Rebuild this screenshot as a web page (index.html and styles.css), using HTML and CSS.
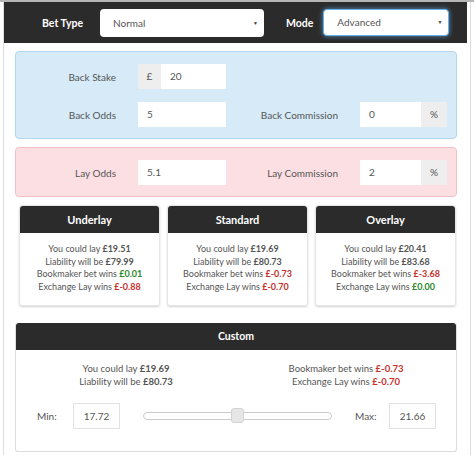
FILE: index.html
```html
<!DOCTYPE html>
<html lang="en">
<head>
    <meta charset="UTF-8">
    <meta name="viewport" content="width=device-width, initial-scale=1.0">
    <title>Matched Betting Calculator</title>
    <link rel="stylesheet" href="styles.css">
</head>
<body>
    <div class="calc">
        <div class="toolbar">
            <label class="bar-label bar-label-first" for="bet-type">Bet Type</label>
            <div class="select select-type" id="bet-type">Normal<span class="caret">&#9660;</span></div>
            <label class="bar-label" for="mode">Mode</label>
            <div class="select select-mode" id="mode">Advanced<span class="caret">&#9660;</span></div>
        </div>

        <div class="panel panel-back">
            <div class="field-label">Back Stake</div>
            <div class="input-group">
                <span class="addon addon-pound">&pound;</span>
                <div class="input">20</div>
            </div>
            <div></div>
            <div></div>

            <div class="field-label">Back Odds</div>
            <div class="input-group"><div class="input">5</div></div>
            <div class="field-label">Back Commission</div>
            <div class="input-group">
                <div class="input">0</div>
                <span class="addon addon-pct">%</span>
            </div>
        </div>

        <div class="panel panel-lay">
            <div class="field-label">Lay Odds</div>
            <div class="input-group"><div class="input">5.1</div></div>
            <div class="field-label">Lay Commission</div>
            <div class="input-group">
                <div class="input">2</div>
                <span class="addon addon-pct">%</span>
            </div>
        </div>

        <div class="cards">
            <div class="card">
                <div class="card-head">Underlay</div>
                <div class="card-body">
                    <div>You could lay <b>&pound;19.51</b></div>
                    <div>Liability will be <b>&pound;79.99</b></div>
                    <div>Bookmaker bet wins <b class="win">&pound;0.01</b></div>
                    <div>Exchange Lay wins <b class="loss">&pound;-0.88</b></div>
                </div>
            </div>
            <div class="card">
                <div class="card-head">Standard</div>
                <div class="card-body">
                    <div>You could lay <b>&pound;19.69</b></div>
                    <div>Liability will be <b>&pound;80.73</b></div>
                    <div>Bookmaker bet wins <b class="loss">&pound;-0.73</b></div>
                    <div>Exchange Lay wins <b class="loss">&pound;-0.70</b></div>
                </div>
            </div>
            <div class="card">
                <div class="card-head">Overlay</div>
                <div class="card-body">
                    <div>You could lay <b>&pound;20.41</b></div>
                    <div>Liability will be <b>&pound;83.68</b></div>
                    <div>Bookmaker bet wins <b class="loss">&pound;-3.68</b></div>
                    <div>Exchange Lay wins <b class="win">&pound;0.00</b></div>
                </div>
            </div>
        </div>

        <div class="custom">
            <div class="custom-head">Custom</div>
            <div class="custom-body">
                <div class="custom-results">
                    <div>
                        <div>You could lay <b>&pound;19.69</b></div>
                        <div>Liability will be <b>&pound;80.73</b></div>
                    </div>
                    <div>
                        <div>Bookmaker bet wins <b class="loss">&pound;-0.73</b></div>
                        <div>Exchange Lay wins <b class="loss">&pound;-0.70</b></div>
                    </div>
                </div>
                <div class="range-row">
                    <span class="range-label">Min:</span>
                    <div class="range-input">17.72</div>
                    <div class="slider">
                        <div class="slider-thumb"></div>
                    </div>
                    <span class="range-label range-label-max">Max:</span>
                    <div class="range-input">21.66</div>
                </div>
            </div>
        </div>
    </div>
</body>
</html>
```

FILE: styles.css
```css
body {
    margin: 0;
    font-family: 'Lato', 'Liberation Sans', sans-serif;
    font-size: 9px;
    color: #555;
    background: #fff;
    border-top: 2px solid #b5b5b5;
}
.calc {
    margin: 0 3px;
    padding: 0 3px 0 0;
    height: 453px;
    border-left: 1px solid #ddd;
    border-right: 1px solid #ddd;
    box-sizing: border-box;
}
.toolbar {
    display: flex;
    align-items: center;
    height: 41px;
    background: #2b2b2b;
}
.bar-label {
    flex-shrink: 0;
    white-space: nowrap;
    color: #fff;
    font-weight: bold;
    font-size: 10.5px;
    margin: 0 10px 0 22px;
}
.bar-label-first {
    margin-left: 38px;
    margin-right: 0;
    width: 58px;
}
.select {
    flex-shrink: 0;
    position: relative;
    box-sizing: border-box;
    height: 28px;
    line-height: 28px;
    padding-left: 13px;
    background: #fff;
    border-radius: 4px;
    font-size: 10px;
    color: #555;
}
.select-type {
    width: 164px;
}
.select-mode {
    width: 126px;
    height: 27px;
    line-height: 25px;
    border: 1px solid #66afe9;
    box-shadow: 0 0 5px rgba(102, 175, 233, 0.8);
}
.caret {
    position: absolute;
    right: 6px;
    top: 0;
    font-size: 5px;
    color: #333;
}
.panel {
    display: grid;
    grid-template-columns: 122px 88px 134px 87px;
    row-gap: 13px;
    align-items: center;
    margin: 8px 10px 0 11px;
    padding: 12px 0 11px;
    border: 1px solid;
    border-radius: 4px;
}
.panel-back {
    background: #d6eaf8;
    border-color: #b3d7ee;
}
.panel-lay {
    background: #fcdfe3;
    border-color: #f3c0c8;
}
.field-label {
    text-align: right;
    padding-right: 22px;
    font-size: 10px;
}
.input-group {
    display: flex;
    height: 25px;
}
.input {
    flex: 1;
    background: #fff;
    line-height: 25px;
    padding-left: 9px;
    font-size: 10px;
}
.addon {
    background: #eee;
    line-height: 25px;
    text-align: center;
    font-size: 10px;
}
.addon-pound {
    width: 23px;
}
.addon-pct {
    width: 26px;
}
.cards {
    display: grid;
    grid-template-columns: repeat(3, 141px);
    column-gap: 7px;
    margin: 8px 14px 0 15px;
}
.card {
    border: 1px solid #e6e6e6;
    border-radius: 3px;
    box-shadow: 0 1px 2px rgba(0, 0, 0, 0.18);
    height: 101px;
    box-sizing: border-box;
}
.card-head {
    background: #2b2b2b;
    color: #fff;
    font-weight: bold;
    font-size: 11px;
    text-align: center;
    height: 27px;
    line-height: 27px;
    border-radius: 3px 3px 0 0;
}
.card-body {
    padding-top: 10px;
    text-align: center;
    line-height: 12.7px;
}
.win {
    color: #2c8a2c;
}
.loss {
    color: #c9302c;
}
.custom {
    margin: 17px 10px 0 11px;
    border: 1px solid #ddd;
    border-top: none;
    border-radius: 3px;
}
.custom-head {
    background: #2b2b2b;
    color: #fff;
    font-weight: bold;
    font-size: 10.5px;
    text-align: center;
    height: 27px;
    line-height: 27px;
    border-radius: 3px 3px 0 0;
}
.custom-body {
    padding: 12px 0 22px;
    font-size: 9.5px;
}
.custom-results {
    display: grid;
    grid-template-columns: 1fr 1fr;
    text-align: center;
    line-height: 13px;
}
.range-row {
    display: flex;
    align-items: center;
    margin-top: 15px;
    padding-left: 21px;
}
.range-label {
    width: 36px;
    font-size: 10px;
}
.range-label-max {
    width: 34px;
}
.range-input {
    box-sizing: border-box;
    width: 47px;
    height: 26px;
    line-height: 24px;
    border: 1px solid #e2e2e2;
    text-align: center;
    font-size: 10px;
}
.slider {
    position: relative;
    box-sizing: border-box;
    width: 189px;
    height: 8px;
    margin: 0 23px;
    border: 1px solid #ccc;
    border-radius: 4px;
    background: #fff;
}
.slider-thumb {
    position: absolute;
    left: 87px;
    top: -5px;
    width: 13px;
    height: 15px;
    border: 1px solid #d3d3d3;
    border-radius: 3px;
    background: #e6e6e6;
    box-sizing: border-box;
}
```
